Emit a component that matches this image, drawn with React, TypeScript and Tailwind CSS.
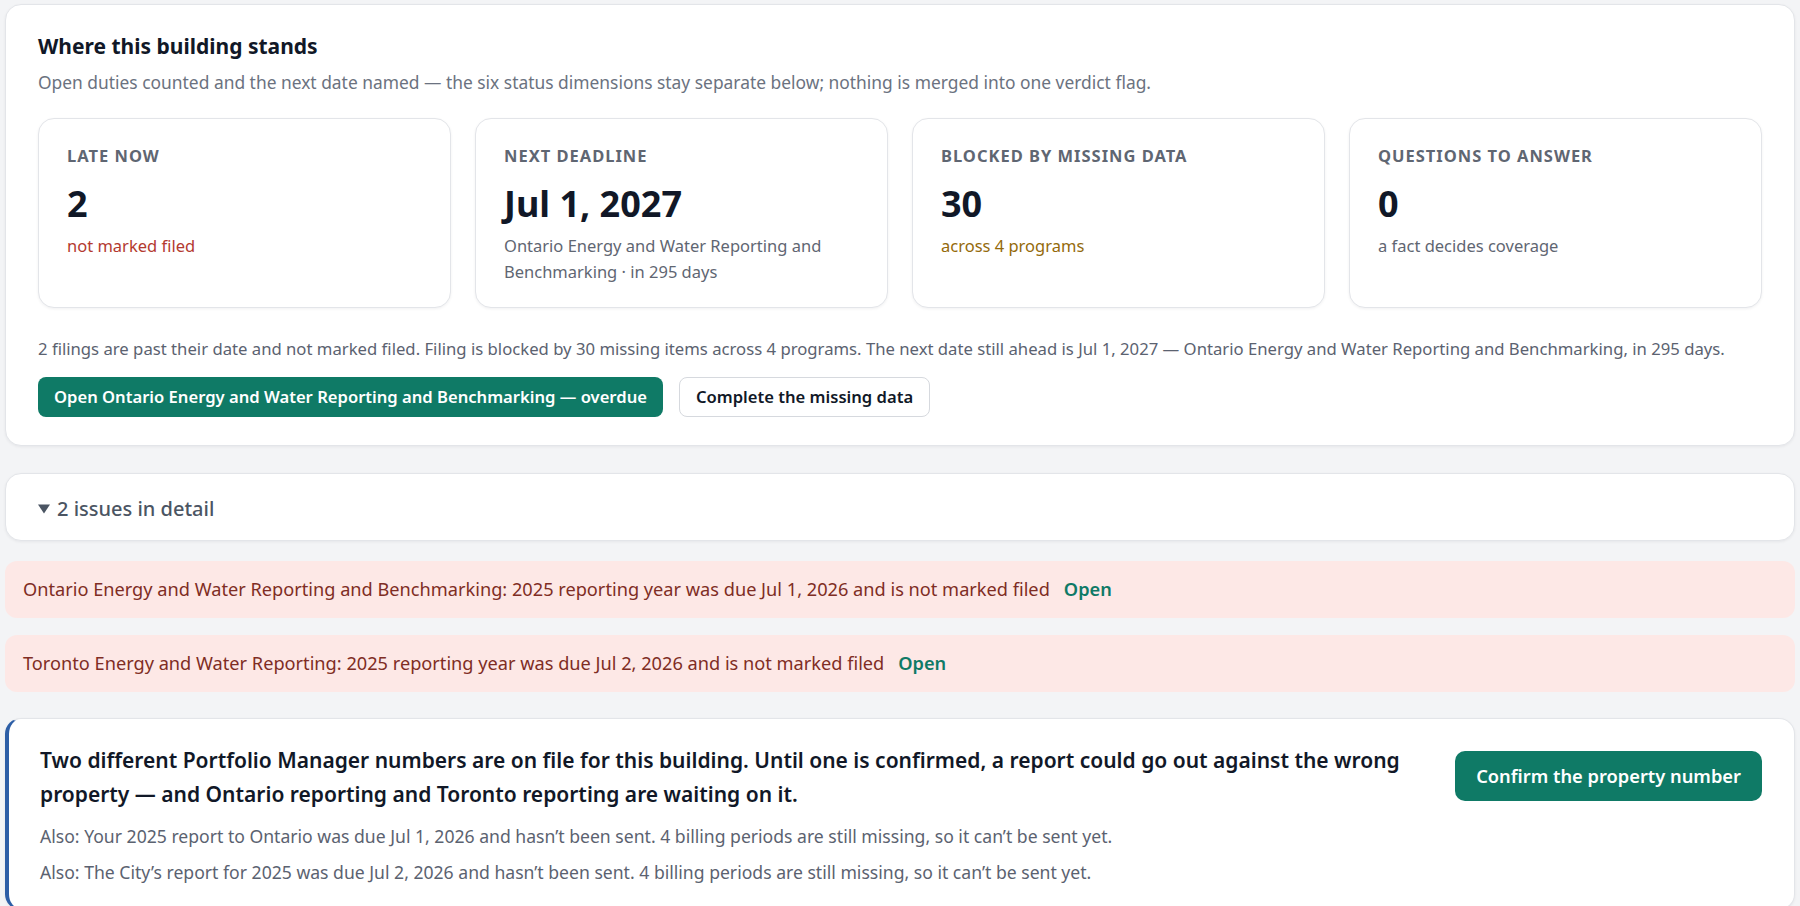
import React from 'react';

type Stat = {
  label: string;
  value: string;
  note: string;
  tone: string;
};

const stats: Stat[] = [
  { label: 'Late now', value: '2', note: 'not marked filed', tone: 'text-[#b3392f]' },
  {
    label: 'Next deadline',
    value: 'Jul 1, 2027',
    note: 'Ontario Energy and Water Reporting and Benchmarking · in 295 days',
    tone: 'text-[#5f6672]',
  },
  { label: 'Blocked by missing data', value: '30', note: 'across 4 programs', tone: 'text-[#946a0a]' },
  { label: 'Questions to answer', value: '0', note: 'a fact decides coverage', tone: 'text-[#5f6672]' },
];

const issues = [
  'Ontario Energy and Water Reporting and Benchmarking: 2025 reporting year was due Jul 1, 2026 and is not marked filed',
  'Toronto Energy and Water Reporting: 2025 reporting year was due Jul 2, 2026 and is not marked filed',
];

function StatCard({ stat }: { stat: Stat }) {
  return (
    <div className="rounded-2xl border border-[#e3e5e9] bg-white px-7 pt-[27px] pb-[22px] shadow-[0_1px_3px_rgba(17,24,39,0.06)]">
      <div className="text-[16.5px] leading-5 font-bold uppercase tracking-[0.06em] text-[#5f6672]">{stat.label}</div>
      <div className="mt-[18px] text-4xl leading-10 font-bold text-[#111827]">{stat.value}</div>
      <div className={`mt-[9px] text-[16.5px] leading-[26px] ${stat.tone}`}>{stat.note}</div>
    </div>
  );
}

export default function App() {
  return (
    <main className="min-h-screen bg-[#f3f4f6] px-[5px] pt-1 font-['Noto_Sans',sans-serif] text-[#111827]">
      {/* Overview card */}
      <section className="rounded-2xl border border-[#e3e5e9] bg-white px-8 pt-[27px] pb-7 shadow-[0_1px_3px_rgba(17,24,39,0.06)]">
        <h1 className="text-[21px] leading-7 font-bold text-[#111827]">Where this building stands</h1>
        <p className="mt-[10px] text-[17.4px] leading-6 text-[#6b7280]">
          Open duties counted and the next date named — the six status dimensions stay separate below; nothing is
          merged into one verdict flag.
        </p>

        <div className="mt-6 grid grid-cols-4 gap-6">
          {stats.map((s) => (
            <StatCard key={s.label} stat={s} />
          ))}
        </div>

        <p className="mt-[30px] text-[16.7px] leading-[22px] text-[#5b6270]">
          2 filings are past their date and not marked filed. Filing is blocked by 30 missing items across 4 programs.
          The next date still ahead is Jul 1, 2027 — Ontario Energy and Water Reporting and Benchmarking, in 295 days.
        </p>

        <div className="mt-[17px] flex items-center gap-4">
          <button className="h-10 rounded-lg bg-[#0f7a66] px-4 text-[16.6px] font-semibold text-white">
            Open Ontario Energy and Water Reporting and Benchmarking — overdue
          </button>
          <button className="h-10 rounded-lg border border-[#d6d9de] bg-white px-4 text-[16.6px] font-semibold text-[#111827]">
            Complete the missing data
          </button>
        </div>
      </section>

      {/* Collapsible issue list */}
      <section className="mt-[27px] rounded-2xl border border-[#e3e5e9] bg-white px-8 pt-[22px] pb-[18px] shadow-[0_1px_3px_rgba(17,24,39,0.06)]">
        <div className="flex items-center text-[20px] leading-[26px] font-medium text-[#4b5563]">
          <svg width="12" height="10" viewBox="0 0 12 10" className="mr-[7px] shrink-0" fill="currentColor">
            <path d="M0 0.5h12L6 9.5z" />
          </svg>
          2 issues in detail
        </div>
      </section>

      <div className="mt-[20px] flex flex-col gap-[17px]">
        {issues.map((text) => (
          <div key={text} className="rounded-xl bg-[#fde8e6] px-[18px] py-4 text-[18.2px] leading-[25px] text-[#7f2d24]">
            {text}
            <a className="ml-3.5 font-semibold text-[#0f7a66]">Open</a>
          </div>
        ))}
      </div>

      {/* Property number conflict */}
      <section className="mt-[26px] flex items-start gap-8 rounded-2xl border border-l-4 border-[#e3e5e9] border-l-[#2d5ea6] bg-white pt-6 pr-8 pb-6 pl-[31px] shadow-[0_1px_3px_rgba(17,24,39,0.06)]">
        <div className="flex-1">
          <h2 className="text-[21px] leading-[34px] font-semibold text-[#111827]">
            Two different Portfolio Manager numbers are on file for this building. Until one is confirmed, a report could
            go out against the wrong property — and Ontario reporting and Toronto reporting are waiting on it.
          </h2>
          <p className="mt-3 text-[17.6px] leading-[26px] text-[#5b6270]">
            Also: Your 2025 report to Ontario was due Jul 1, 2026 and hasn’t been sent. 4 billing periods are still
            missing, so it can’t be sent yet.
          </p>
          <p className="mt-2.5 text-[17.6px] leading-[26px] text-[#5b6270]">
            Also: The City’s report for 2025 was due Jul 2, 2026 and hasn’t been sent. 4 billing periods are still
            missing, so it can’t be sent yet.
          </p>
        </div>
        <button className="mt-2 h-[50px] shrink-0 rounded-[10px] bg-[#0f7a66] px-[21px] text-[18.3px] font-semibold text-white">
          Confirm the property number
        </button>
      </section>
    </main>
  );
}
